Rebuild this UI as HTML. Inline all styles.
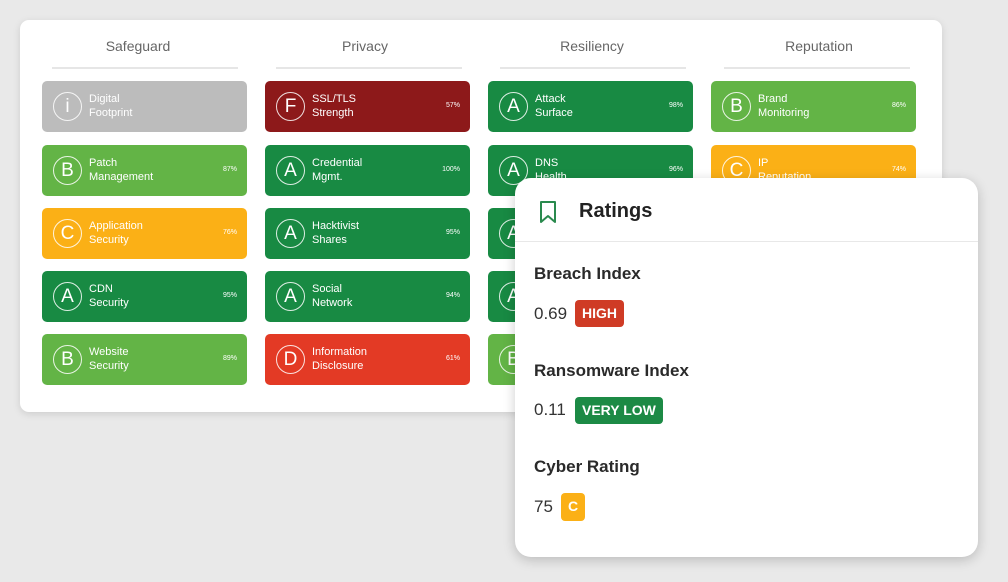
<!DOCTYPE html>
<html><head><style>
*{margin:0;padding:0;box-sizing:border-box}
body{width:1008px;height:582px;background:#e9e9e9;position:relative;overflow:hidden;font-family:"Liberation Sans",sans-serif}
.card{position:absolute;left:20px;top:20px;width:922px;height:392px;background:#fff;border-radius:9px;box-shadow:0 2px 8px rgba(0,0,0,.12)}
.h{position:absolute;top:18px;width:186px;text-align:center;font-size:14px;color:#666}
.hl{position:absolute;top:47px;width:186px;height:2px;background:#e6e6e6}
.t{position:absolute;width:205px;height:51px;border-radius:5px;color:#fff}
.c{position:absolute;left:11px;top:11px;width:29px;height:29px;border:1px solid rgba(255,255,255,.85);border-radius:50%;text-align:center;line-height:27px;font-size:19px}
.n{position:absolute;left:47px;top:12px;font-size:11px;line-height:13.5px}
.p{position:absolute;right:10px;top:21px;font-size:7px}
.gy{background:#bcbcbc}.dr{background:#8d191a}.dg{background:#188a43}.lg{background:#63b446}.or{background:#fbb016}.rd{background:#e33a25}
.pop{position:absolute;left:515px;top:178px;width:463px;height:379px;background:#fff;border-radius:16px;box-shadow:0 3px 12px rgba(0,0,0,.2);color:#222}
.tt{position:absolute;left:64px;top:22px;font-size:20px;font-weight:bold;color:#222}
.div{position:absolute;left:0;right:0;top:63px;height:1px;background:#e8e8e8}
.lb{position:absolute;left:19px;font-size:17px;font-weight:bold;color:#2a2a2a}
.v{position:absolute;left:19px;font-size:17px;color:#333}
.b{position:absolute;height:27px;border-radius:4px;color:#fff;font-weight:bold;font-size:14px;line-height:27px;padding:0 7px}
</style></head><body>
<div class="card">
<div class="h" style="left:25px">Safeguard</div><div class="hl" style="left:32px"></div>
<div class="h" style="left:252px">Privacy</div><div class="hl" style="left:256px"></div>
<div class="h" style="left:479px">Resiliency</div><div class="hl" style="left:480px"></div>
<div class="h" style="left:706px">Reputation</div><div class="hl" style="left:704px"></div>
</div>
<div class="t gy" style="left:42px;top:81px"><div class="c">i</div><div class="n">Digital<br>Footprint</div></div>
<div class="t lg" style="left:42px;top:145px"><div class="c">B</div><div class="n">Patch<br>Management</div><div class="p">87%</div></div>
<div class="t or" style="left:42px;top:208px"><div class="c">C</div><div class="n">Application<br>Security</div><div class="p">76%</div></div>
<div class="t dg" style="left:42px;top:271px"><div class="c">A</div><div class="n">CDN<br>Security</div><div class="p">95%</div></div>
<div class="t lg" style="left:42px;top:334px"><div class="c">B</div><div class="n">Website<br>Security</div><div class="p">89%</div></div>
<div class="t dr" style="left:265px;top:81px"><div class="c">F</div><div class="n">SSL/TLS<br>Strength</div><div class="p">57%</div></div>
<div class="t dg" style="left:265px;top:145px"><div class="c">A</div><div class="n">Credential<br>Mgmt.</div><div class="p">100%</div></div>
<div class="t dg" style="left:265px;top:208px"><div class="c">A</div><div class="n">Hacktivist<br>Shares</div><div class="p">95%</div></div>
<div class="t dg" style="left:265px;top:271px"><div class="c">A</div><div class="n">Social<br>Network</div><div class="p">94%</div></div>
<div class="t rd" style="left:265px;top:334px"><div class="c">D</div><div class="n">Information<br>Disclosure</div><div class="p">61%</div></div>
<div class="t dg" style="left:488px;top:81px"><div class="c">A</div><div class="n">Attack<br>Surface</div><div class="p">98%</div></div>
<div class="t dg" style="left:488px;top:145px"><div class="c">A</div><div class="n">DNS<br>Health</div><div class="p">96%</div></div>
<div class="t dg" style="left:488px;top:208px"><div class="c">A</div></div>
<div class="t dg" style="left:488px;top:271px"><div class="c">A</div></div>
<div class="t lg" style="left:488px;top:334px"><div class="c">B</div></div>
<div class="t lg" style="left:711px;top:81px"><div class="c">B</div><div class="n">Brand<br>Monitoring</div><div class="p">86%</div></div>
<div class="t or" style="left:711px;top:145px"><div class="c">C</div><div class="n">IP<br>Reputation</div><div class="p">74%</div></div>
<div class="pop">
<svg style="position:absolute;left:24px;top:22px" width="18" height="24" viewBox="0 0 18 24"><path d="M2 2H16V22L9 16L2 22Z" fill="none" stroke="#2a8a4e" stroke-width="2" stroke-linejoin="round"/></svg>
<div class="tt">Ratings</div><div class="div"></div>
<div class="lb" style="top:86px">Breach Index</div>
<div class="v" style="top:126px">0.69</div><div class="b" style="left:60px;top:122px;background:#cf3b25">HIGH</div>
<div class="lb" style="top:183px">Ransomware Index</div>
<div class="v" style="top:222px">0.11</div><div class="b" style="left:60px;top:219px;background:#1c8a45">VERY LOW</div>
<div class="lb" style="top:279px">Cyber Rating</div>
<div class="v" style="top:319px">75</div><div class="b" style="left:46px;top:315px;background:#fbb016;height:28px">C</div>
</div>
</body></html>
